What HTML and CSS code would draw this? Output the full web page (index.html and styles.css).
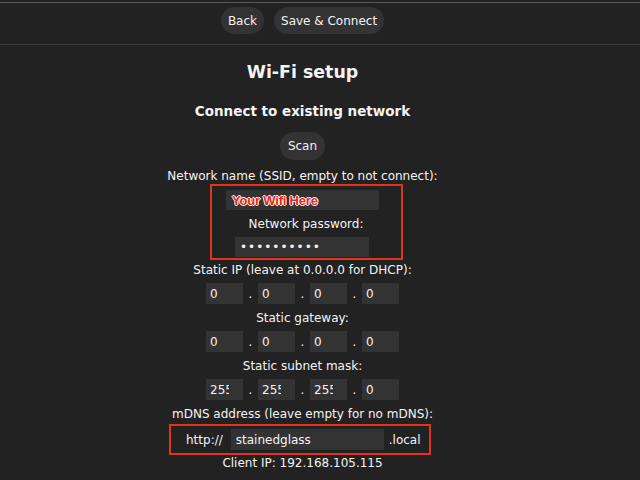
FILE: index.html
```html
<!DOCTYPE html>
<html>
<head>
<meta charset="utf-8">
<link rel="stylesheet" href="styles.css">
</head>
<body>
<div class="topbar">
  <div class="topinner">
    <span class="btn">Back</span>
    <span class="btn">Save &amp; Connect</span>
  </div>
</div>
<div class="main">
  <div class="h2">Wi-Fi setup</div>
  <div class="h3">Connect to existing network</div>
  <span class="btn scan">Scan</span>
  <div class="label l1">Network name (SSID, empty to not connect):</div>
  <div class="redbox box1">
    <div class="field ssid"><span class="note">Your Wifi Here</span></div>
    <div class="label l2">Network password:</div>
    <div class="field pw">••••••••••</div>
  </div>
  <div class="label l3">Static IP (leave at 0.0.0.0 for DHCP):</div>
  <div class="iprow">
    <div class="field ip"><span>0</span></div><span class="dot">.</span>
    <div class="field ip"><span>0</span></div><span class="dot">.</span>
    <div class="field ip"><span>0</span></div><span class="dot">.</span>
    <div class="field ip"><span>0</span></div>
  </div>
  <div class="label l4">Static gateway:</div>
  <div class="iprow">
    <div class="field ip"><span>0</span></div><span class="dot">.</span>
    <div class="field ip"><span>0</span></div><span class="dot">.</span>
    <div class="field ip"><span>0</span></div><span class="dot">.</span>
    <div class="field ip"><span>0</span></div>
  </div>
  <div class="label l4">Static subnet mask:</div>
  <div class="iprow">
    <div class="field ip"><span>255</span></div><span class="dot">.</span>
    <div class="field ip"><span>255</span></div><span class="dot">.</span>
    <div class="field ip"><span>255</span></div><span class="dot">.</span>
    <div class="field ip"><span>0</span></div>
  </div>
  <div class="label l4">mDNS address (leave empty for no mDNS):</div>
  <div class="redbox box2">
    <span class="pre">http://</span>
    <div class="field mdns">stainedglass</div>
    <span class="post">.local</span>
  </div>
  <div class="label client">Client IP: 192.168.105.115</div>
</div>
</body>
</html>
```

FILE: styles.css
```css
html, body {
  margin: 0;
  padding: 0;
  background: #222;
  color: #f4f4f4;
  font-family: "DejaVu Sans", Verdana, sans-serif;
  font-size: 12px;
  height: 480px;
  overflow: hidden;
}
.topbar {
  margin-top: 2px;
  border-top: 1px solid #5a5a5a;
  border-bottom: 1px solid #3c3c3c;
  height: 41px;
  background: #222;
}
.topinner {
  width: 605px;
  display: flex;
  justify-content: center;
  gap: 10px;
  padding-top: 4px;
}
.btn {
  display: inline-flex;
  align-items: center;
  justify-content: center;
  height: 27px;
  padding: 0 7px;
  border-radius: 14px;
  background: #333;
  color: #f4f4f4;
  font-size: 12px;
  box-sizing: border-box;
}
.main {
  width: 605px;
  display: flex;
  flex-direction: column;
  align-items: center;
  text-align: center;
}
.h2 {
  font-weight: bold;
  font-size: 17.4px;
  line-height: 22px;
  margin-top: 16px;
}
.h3 {
  font-weight: bold;
  font-size: 13.5px;
  line-height: 18px;
  margin-top: 19px;
}
.scan {
  margin-top: 12px;
  height: 28px;
  padding: 0 8px;
}
.label {
  line-height: 16px;
  height: 16px;
}
.l1 { margin-top: 8px; }
.l2 { margin-top: 6px; }
.l3 { margin-top: 2px; }
.l4 { margin-top: 6px; }
.redbox {
  border: 2px solid #e2331d;
  box-sizing: border-box;
  display: flex;
  align-items: center;
}
.box1 {
  width: 193px;
  height: 76px;
  flex-direction: column;
  margin-left: 7px;
  padding-top: 4px;
}
.field {
  background: #333;
  text-align: left;
  box-sizing: border-box;
  display: flex;
  align-items: center;
  color: #f4f4f4;
}
.ssid {
  width: 153px;
  height: 20px;
  margin-left: -7px;
  padding-left: 6px;
}
.note {
  color: #e8231a;
  font-family: "Liberation Sans", Arial, sans-serif;
  font-weight: bold;
  font-size: 13px;
  letter-spacing: -0.2px;
  text-shadow: 1px 0 0 #fff, -1px 0 0 #fff, 0 1px 0 #fff, 0 -1px 0 #fff;
}
.pw {
  width: 134px;
  height: 20px;
  margin-top: 5px;
  margin-left: -8px;
  padding-left: 5px;
  font-size: 12px;
  letter-spacing: 1px;
}
.iprow {
  display: flex;
  align-items: center;
  margin-top: 5px;
}
.ip {
  width: 37px;
  height: 21px;
  padding-left: 4px;
}
.ip span {
  display: block;
  width: 19px;
  overflow: hidden;
  white-space: nowrap;
}
.dot {
  width: 15px;
  text-align: center;
}
.box2 {
  width: 262px;
  height: 31px;
  margin-top: 2px;
  justify-content: flex-start;
  padding-left: 15px;
  margin-left: -5px;
}
.pre { margin-right: 8px; }
.mdns {
  width: 153px;
  height: 21px;
  padding-left: 5px;
}
.post { margin-left: 5px; }
.client {
  margin-top: 0;
}
```
